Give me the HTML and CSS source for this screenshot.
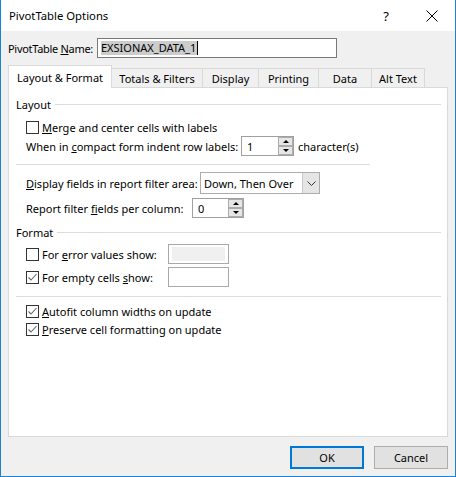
FILE: index.html
```html
<!DOCTYPE html>
<html>
<head>
<meta charset="utf-8">
<link rel="stylesheet" href="styles.css">
</head>
<body>
<div class="titlebar">
  <span class="title">PivotTable Options</span>
  <span class="help">?</span>
  <span class="close"><svg width="12" height="12" viewBox="0 0 12 12"><path d="M0.5 0.5 L11.5 11.5 M11.5 0.5 L0.5 11.5" stroke="#000" stroke-width="1" fill="none"/></svg></span>
</div>
<div class="namerow">
  <span class="namelabel">PivotTable <u>N</u>ame:</span>
  <div class="textbox"><span class="sel">EXSIONAX_DATA_1</span><span class="caret"></span></div>
</div>
<div class="tabs">
  <div class="tab active">Layout &amp; Format</div>
  <div class="tab t-totals">Totals &amp; Filters</div>
  <div class="tab t-display">Display</div>
  <div class="tab t-printing">Printing</div>
  <div class="tab t-data">Data</div>
  <div class="tab t-alt">Alt Text</div>
</div>
<div class="panel">
  <div class="group">Layout</div>
  <div class="row r-merge">
    <span class="cb"></span><span class="lbl"><u>M</u>erge and center cells with labels</span>
  </div>
  <div class="row r-compact">
    <span class="lbl w-compact">When in <u>c</u>ompact form indent row labels:</span>
    <div class="spin s-compact"><span class="val">1</span><div class="arrows"><div class="arr up"><i></i></div><div class="arr down"><i></i></div></div></div>
    <span class="after">character(s)</span>
  </div>
  <div class="sep sep1"></div>
  <div class="row r-display">
    <span class="lbl w-display"><u>D</u>isplay fields in report filter area:</span>
    <div class="dd"><span class="ddtxt">Down, Then Over</span><span class="ddbtn"><svg width="9" height="5" viewBox="0 0 9 5"><path d="M0.5 0.5 L4.5 4.5 L8.5 0.5" fill="none" stroke="#333" stroke-width="1"/></svg></span></div>
  </div>
  <div class="row r-report">
    <span class="lbl w-report">Report filter <u>f</u>ields per column:</span>
    <div class="spin s-report"><span class="val">0</span><div class="arrows"><div class="arr up"><i></i></div><div class="arr down"><i></i></div></div></div>
  </div>
  <div class="group g-format">Format</div>
  <div class="row r-error">
    <span class="cb"></span><span class="lbl w-fmt">For <u>e</u>rror values show:</span>
    <div class="fbox disabled"><span></span></div>
  </div>
  <div class="row r-empty">
    <span class="cb"><svg width="11" height="11" viewBox="0 0 11 11"><path d="M1.5 5.5 L4 8 L9.5 2" fill="none" stroke="#666" stroke-width="1.1"/></svg></span><span class="lbl w-fmt">For empty cells <u>s</u>how:</span>
    <div class="fbox"></div>
  </div>
  <div class="sep sep2"></div>
  <div class="row r-autofit">
    <span class="cb"><svg width="11" height="11" viewBox="0 0 11 11"><path d="M1.5 5.5 L4 8 L9.5 2" fill="none" stroke="#666" stroke-width="1.1"/></svg></span><span class="lbl"><u>A</u>utofit column widths on update</span>
  </div>
  <div class="row r-preserve">
    <span class="cb"><svg width="11" height="11" viewBox="0 0 11 11"><path d="M1.5 5.5 L4 8 L9.5 2" fill="none" stroke="#666" stroke-width="1.1"/></svg></span><span class="lbl"><u>P</u>reserve cell formatting on update</span>
  </div>
</div>
<div class="buttons">
  <div class="btn default">OK</div>
  <div class="btn">Cancel</div>
</div>
</body>
</html>
```
FILE: styles.css
```css
* { box-sizing: border-box; }
html, body { margin: 0; padding: 0; }
body {
  width: 456px;
  height: 477px;
  background: #f0f0f0;
  border: 1px solid #1883d7;
  border-top: 0;
  font-family: "Noto Sans", "DejaVu Sans", sans-serif;
  font-size: 11px;
  color: #000;
  overflow: hidden;
  white-space: nowrap;
}
u { text-decoration: underline; text-underline-offset: 1px; }

.titlebar {
  height: 31px;
  background: #fff;
  display: flex;
  align-items: center;
}
.title { flex: 1; padding-left: 8px; font-size: 11.3px; }
.help { width: 46px; text-align: center; font-size: 13px; }
.close { width: 46px; display: flex; justify-content: center; }

.namerow {
  display: flex;
  align-items: center;
  height: 27px;
  padding: 7px 0 0 7px;
}
.namelabel { width: 89px; flex: none; letter-spacing: -0.3px; }
.textbox {
  width: 240px;
  height: 20px;
  flex: none;
  border: 1px solid #7a7a7a;
  background: #fff;
  display: flex;
  align-items: center;
  padding-left: 3px;
}
.sel { background: #cccccc; line-height: 14px; padding-right: 1px; }
.caret { width: 1px; height: 14px; background: #000; }

.tabs {
  display: flex;
  align-items: flex-end;
  height: 22px;
  margin-top: 7px;
  padding-left: 7px;
}
.tab {
  height: 19px;
  flex: none;
  display: flex;
  align-items: center;
  justify-content: center;
  border-top: 1px solid #d9d9d9;
  border-right: 1px solid #d9d9d9;
  background: #f0f0f0;
  padding-top: 1px;
}
.tab.active {
  width: 104px;
  height: 23px;
  border: 1px solid #d9d9d9;
  border-bottom: 0;
  background: #fff;
  margin-bottom: -1px;
  position: relative;
  z-index: 1;
  padding-top: 0;
}
.t-totals { width: 91px; }
.t-display { width: 56px; }
.t-printing { width: 60px; }
.t-data { width: 53px; }
.t-alt { width: 53px; }

.panel {
  margin: 0 7px;
  height: 350px;
  border: 1px solid #d9d9d9;
  background: #fff;
  padding: 8px 6px 0 7px;
}
.group {
  display: flex;
  align-items: center;
  height: 16px;
}
.group::after {
  content: "";
  flex: 1;
  height: 1px;
  background: #dcdcdc;
  margin-left: 4px;
}
.g-format { margin-top: 6px; }
.row {
  display: flex;
  align-items: center;
  padding-left: 10px;
}
.cb {
  width: 13px;
  height: 13px;
  border: 1px solid #333;
  background: #fff;
  margin-right: 3px;
  flex: none;
  display: flex;
}
.lbl { flex: none; }
.r-merge { margin-top: 6px; height: 18px; }
.r-compact { height: 20px; }
.w-compact { width: 215px; }
.after { margin-left: 4px; }
.sep { height: 1px; background: #dcdcdc; }
.sep1 { width: 354px; margin-top: 8px; }
.sep2 { margin-top: 9px; }
.r-display { margin-top: 7px; height: 22px; }
.w-display { width: 174px; }
.r-report { margin-top: 4px; height: 20px; }
.w-report { width: 166px; }
.r-error { margin-top: 4px; height: 20px; }
.r-empty { margin-top: 3px; height: 20px; }
.w-fmt { width: 126px; }
.r-autofit { margin-top: 5px; height: 18px; }
.r-preserve { height: 18px; }

.spin {
  height: 20px;
  flex: none;
  border: 1px solid #a0a0a0;
  background: #fff;
  display: flex;
  align-items: center;
  padding-left: 5px;
}
.s-compact { width: 53px; }
.s-report { width: 52px; }
.val { flex: 1; }
.arrows { display: flex; flex-direction: column; }
.arr {
  width: 15px;
  height: 9px;
  background: #e6e6e6;
  border: 1px solid #acacac;
  display: flex;
  align-items: center;
  justify-content: center;
}
.arr i {
  display: block;
  width: 0;
  height: 0;
  border-left: 3px solid transparent;
  border-right: 3px solid transparent;
}
.up i { border-bottom: 3px solid #000; }
.down i { border-top: 3px solid #000; }

.dd {
  width: 120px;
  height: 22px;
  flex: none;
  border: 1px solid #adadad;
  background: #fff;
  display: flex;
  align-items: center;
  padding-left: 3px;
}
.ddtxt { flex: 1; }
.ddbtn {
  width: 17px;
  height: 20px;
  background: #e5e5e5;
  border-left: 1px solid #c8c8c8;
  display: flex;
  align-items: center;
  justify-content: center;
}

.fbox {
  width: 61px;
  height: 20px;
  flex: none;
  border: 1px solid #a9a9a9;
  background: #fff;
  padding: 2px 3px;
  display: flex;
}
.fbox.disabled span { flex: 1; background: #f0f0f0; }

.buttons {
  display: flex;
  justify-content: flex-end;
  gap: 10px;
  padding-right: 7px;
  margin-top: 9px;
}
.btn {
  width: 74px;
  height: 23px;
  background: #e1e1e1;
  border: 1px solid #adadad;
  display: flex;
  align-items: center;
  justify-content: center;
}
.btn.default { border: 2px solid #0078d7; }
```
